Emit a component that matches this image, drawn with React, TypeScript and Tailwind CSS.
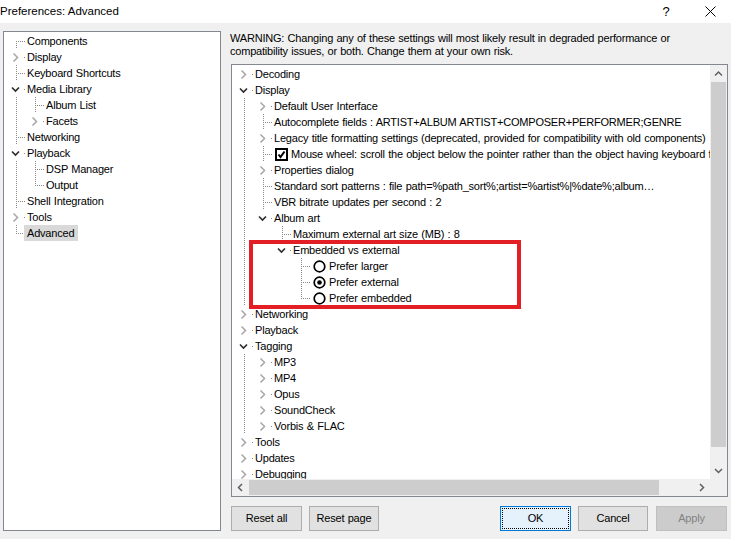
import type { FC } from "react";

type Control = "check" | "radio" | "radio-on";

type Node = {
  label: string;
  open?: boolean;
  closed?: boolean;
  control?: Control;
  selected?: boolean;
  children?: Node[];
};

type Row = Node & { level: number; rails: boolean[]; next: boolean; first: boolean };

// flatten the visible part of a tree, keeping track of which ancestor
// levels still need a vertical guide line running through the row
const flatten = (nodes: Node[], level = 0, rails: boolean[] = []): Row[] =>
  nodes.flatMap((node, i) => {
    const next = i < nodes.length - 1;
    const row: Row = { ...node, level, rails, next, first: level === 0 && i === 0 };
    const kids =
      node.open && node.children ? flatten(node.children, level + 1, [...rails, next]) : [];
    return [row, ...kids];
  });

const pages: Node[] = [
  { label: "Components" },
  { label: "Display", closed: true },
  { label: "Keyboard Shortcuts" },
  {
    label: "Media Library",
    open: true,
    children: [{ label: "Album List" }, { label: "Facets", closed: true }],
  },
  { label: "Networking" },
  {
    label: "Playback",
    open: true,
    children: [{ label: "DSP Manager" }, { label: "Output" }],
  },
  { label: "Shell Integration" },
  { label: "Tools", closed: true },
  { label: "Advanced", selected: true },
];

const advanced: Node[] = [
  { label: "Decoding", closed: true },
  {
    label: "Display",
    open: true,
    children: [
      { label: "Default User Interface", closed: true },
      { label: "Autocomplete fields : ARTIST+ALBUM ARTIST+COMPOSER+PERFORMER;GENRE" },
      {
        label:
          "Legacy title formatting settings (deprecated, provided for compatibility with old components)",
        closed: true,
      },
      {
        label:
          "Mouse wheel: scroll the object below the pointer rather than the object having keyboard focus",
        control: "check",
      },
      { label: "Properties dialog", closed: true },
      {
        label:
          "Standard sort patterns : file path=%path_sort%;artist=%artist%|%date%;album…",
      },
      { label: "VBR bitrate updates per second : 2" },
      {
        label: "Album art",
        open: true,
        children: [
          { label: "Maximum external art size (MB) : 8" },
          {
            label: "Embedded vs external",
            open: true,
            children: [
              { label: "Prefer larger", control: "radio" },
              { label: "Prefer external", control: "radio-on" },
              { label: "Prefer embedded", control: "radio" },
            ],
          },
        ],
      },
    ],
  },
  { label: "Networking", closed: true },
  { label: "Playback", closed: true },
  {
    label: "Tagging",
    open: true,
    children: [
      { label: "MP3", closed: true },
      { label: "MP4", closed: true },
      { label: "Opus", closed: true },
      { label: "SoundCheck", closed: true },
      { label: "Vorbis & FLAC", closed: true },
    ],
  },
  { label: "Tools", closed: true },
  { label: "Updates", closed: true },
  { label: "Debugging", closed: true },
];

const Guides: FC<{ row: Row }> = ({ row }) => {
  const col = (l: number) => 12 + 19 * l;
  const c = col(row.level);
  const w = c + 10;
  return (
    <svg width={w} height={16} className="shrink-0">
      <g stroke="#8a8a8a" strokeDasharray="1 1" fill="none">
        {row.rails.map((on, l) =>
          on ? <line key={l} x1={col(l) + 0.5} x2={col(l) + 0.5} y1={0} y2={16} /> : null
        )}
        <line x1={c + 0.5} x2={c + 0.5} y1={row.first ? 8 : 0} y2={row.next ? 16 : 9} />
        <line x1={c} x2={w} y1={8.5} y2={8.5} />
      </g>
      {(row.closed || row.open) && <rect x={c - 8} y={0} width={16} height={16} fill="white" />}
      {row.closed && (
        <polyline
          points={`${c - 2.5},4.5 ${c + 1.5},8.5 ${c - 2.5},12.5`}
          fill="none"
          stroke="#a6a6a6"
          strokeWidth={1.5}
        />
      )}
      {row.open && (
        <polyline
          points={`${c - 4},6.5 ${c - 0.5},10 ${c + 3},6.5`}
          fill="none"
          stroke="#2b2b2b"
          strokeWidth={1.6}
        />
      )}
    </svg>
  );
};

const Check: FC = () => (
  <svg width={13} height={13} className="ml-[2px] shrink-0">
    <rect x={1} y={1} width={11} height={11} fill="white" stroke="#000" strokeWidth={2} />
    <polyline points="3.5,6.5 5.5,9 9.5,3.5" fill="none" stroke="#000" strokeWidth={2} />
  </svg>
);

const Radio: FC<{ on: boolean }> = ({ on }) => (
  <svg width={13} height={13} className="ml-[2px] shrink-0">
    <circle cx={6.5} cy={6.5} r={5.3} fill="white" stroke="#000" strokeWidth={1.7} />
    {on && <circle cx={6.5} cy={6.5} r={2.3} fill="#000" />}
  </svg>
);

const Tree: FC<{ rows: Row[] }> = ({ rows }) => (
  <div className="flex flex-col pt-px">
    {rows.map((row, i) => (
      <div key={i} className="flex h-[16px] items-center whitespace-nowrap">
        <Guides row={row} />
        {row.control === "check" && <Check />}
        {row.control === "radio" && <Radio on={false} />}
        {row.control === "radio-on" && <Radio on />}
        <span
          className={
            row.selected
              ? "-ml-[2px] pl-[3px] pr-[4px] leading-[16px] bg-[#d9d9d9]"
              : row.control
              ? "pl-[3px] pr-[3px] leading-[16px]"
              : "pl-px pr-[3px] leading-[16px]"
          }
        >
          {row.label}
        </span>
      </div>
    ))}
  </div>
);

const Arrow: FC<{ dir: "up" | "down" | "left" | "right" }> = ({ dir }) => {
  const points = {
    up: "5,10.5 8.5,7 12,10.5",
    down: "5,7 8.5,10.5 12,7",
    left: "10,5 6.5,8.5 10,12",
    right: "7,5 10.5,8.5 7,12",
  }[dir];
  return (
    <svg width={17} height={17} className="shrink-0">
      <polyline points={points} fill="none" stroke="#606060" strokeWidth={1.5} />
    </svg>
  );
};

const Button: FC<{ label: string; w: string; kind?: "default" | "disabled" }> = ({
  label,
  w,
  kind,
}) => {
  if (kind === "default")
    return (
      <div className={`${w} h-[25px] flex border border-[#0078d7] bg-[#e5f1fb]`}>
        <span className="m-px flex flex-1 items-center justify-center border border-dotted border-black">
          {label}
        </span>
      </div>
    );
  return (
    <div
      className={
        kind === "disabled"
          ? `${w} h-[25px] flex items-center justify-center border border-[#bfbfbf] bg-[#cccccc] text-[#838383]`
          : `${w} h-[25px] flex items-center justify-center border border-[#adadad] bg-[#e1e1e1]`
      }
    >
      {label}
    </div>
  );
};

export default function App() {
  return (
    <div className="w-[731px] h-[539px] flex flex-col overflow-hidden bg-[#f0f0f0] text-[11px] tracking-[-0.2px] [word-spacing:0.5px] text-black font-['Liberation_Sans',Arial,sans-serif]">
      <div className="flex h-[23px] shrink-0 items-center bg-white">
        <span className="text-[11.5px] tracking-normal [word-spacing:0px]">Preferences: Advanced</span>
        <div className="ml-auto flex h-full items-center">
          <span className="w-[46px] text-center text-[13px] tracking-normal">?</span>
          <div className="flex w-[42px] justify-center">
            <svg width={11} height={11}>
              <path d="M0.5 0.5 L10.5 10.5 M10.5 0.5 L0.5 10.5" stroke="#000" strokeWidth={1} />
            </svg>
          </div>
        </div>
      </div>

      <div className="flex flex-1 min-h-0">
        <div className="ml-[3px] mt-[8px] w-[218px] h-[500px] overflow-hidden border border-[#828790] bg-white">
          <Tree rows={flatten(pages)} />
        </div>

        <div className="ml-[9px] mt-[9px] flex w-[498px] flex-col">
          <p className="whitespace-nowrap leading-[13px]">
            WARNING: Changing any of these settings will most likely result in degraded performance or
            <br />
            compatibility issues, or both. Change them at your own risk.
          </p>

          <div className="ml-px mt-[6px] flex h-[433px] flex-col border border-[#828790] bg-white">
            <div className="flex flex-1 min-h-0">
              <div className="relative flex-1 overflow-hidden">
                <Tree rows={flatten(advanced)} />
                <div className="absolute left-[17px] top-[175px] h-[69px] w-[272px] border-4 border-[#e31e24]" />
              </div>
              <div className="flex w-[17px] flex-col bg-[#f0f0f0]">
                <Arrow dir="up" />
                <div className="mx-px h-[365px] bg-[#cdcdcd]" />
                <div className="flex-1" />
                <Arrow dir="down" />
              </div>
            </div>
            <div className="flex h-[17px] bg-[#f0f0f0]">
              <Arrow dir="left" />
              <div className="my-px w-[410px] bg-[#cdcdcd]" />
              <div className="flex-1" />
              <Arrow dir="right" />
              <div className="w-[17px]" />
            </div>
          </div>

          <div className="ml-px mt-[9px] flex">
            <Button label="Reset all" w="w-[71px]" />
            <div className="ml-[7px]">
              <Button label="Reset page" w="w-[70px]" />
            </div>
            <div className="ml-auto">
              <Button label="OK" w="w-[71px]" kind="default" />
            </div>
            <div className="ml-[7px]">
              <Button label="Cancel" w="w-[70px]" />
            </div>
            <div className="ml-[8px] mr-px">
              <Button label="Apply" w="w-[71px]" kind="disabled" />
            </div>
          </div>
        </div>
      </div>
    </div>
  );
}
